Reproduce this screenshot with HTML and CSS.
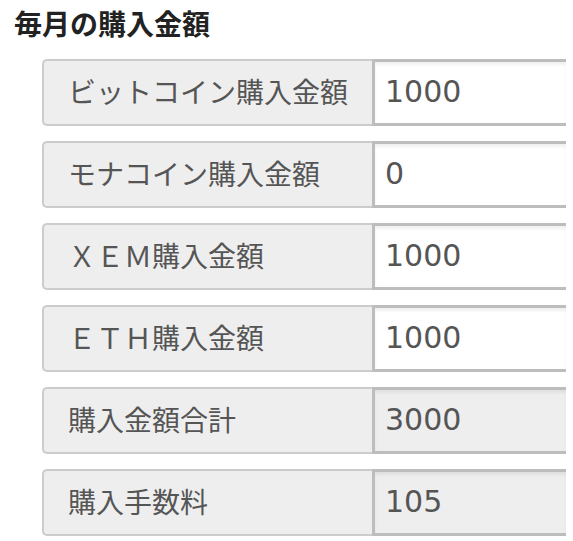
FILE: index.html
```html
<!DOCTYPE html>
<html lang="ja">
<head>
    <meta charset="UTF-8">
    <title>毎月の購入金額</title>
    <link rel="stylesheet" href="styles.css">
</head>
<body>

    <h2 class="title">毎月の購入金額</h2>

    <!-- 入力欄 -->
    <div class="form">
        <div class="row">
            <span class="label">ビットコイン購入金額</span>
            <input class="amount" type="text" value="1000">
        </div>
        <div class="row">
            <span class="label">モナコイン購入金額</span>
            <input class="amount" type="text" value="0">
        </div>
        <div class="row">
            <span class="label">ＸＥＭ購入金額</span>
            <input class="amount" type="text" value="1000">
        </div>
        <div class="row">
            <span class="label">ＥＴＨ購入金額</span>
            <input class="amount" type="text" value="1000">
        </div>

        <!-- 計算結果 (読み取り専用) -->
        <div class="row">
            <span class="label">購入金額合計</span>
            <input class="amount" type="text" value="3000" readonly>
        </div>
        <div class="row">
            <span class="label">購入手数料</span>
            <input class="amount" type="text" value="105" readonly>
        </div>
    </div>

</body>
</html>
```

FILE: styles.css
```css
body {
    margin: 0;
    background: #fff;
    font-family: "DejaVu Sans", "Noto Sans CJK JP", sans-serif;
    color: #555;
}

.title {
    margin: 0;
    padding: 3px 14px 0;
    height: 56px;
    font-family: "Noto Sans CJK JP", sans-serif;
    font-size: 28px;
    font-weight: bold;
    line-height: 40px;
    color: #222;
}

.form {
    display: flex;
    flex-direction: column;
    gap: 15px;
    margin-left: 42px;
    width: 524px;
}

.row {
    display: flex;
    height: 67px;
}

.label {
    display: flex;
    align-items: center;
    box-sizing: border-box;
    width: 330px;
    padding: 0 0 4px 24px;
    background: #eee;
    border: 2px solid #ccc;
    border-right: none;
    border-radius: 5px 0 0 5px;
    font-family: "Noto Sans CJK JP", sans-serif;
    font-size: 28px;
    color: #555;
    white-space: nowrap;
}

.amount {
    flex: 1;
    min-width: 0;
    box-sizing: border-box;
    height: 67px;
    margin: 0;
    padding: 0 0 2px 10px;
    border: 3px solid #bdbdbd;
    border-right: none;
    border-radius: 0;
    box-shadow: inset 0 3px 3px rgba(0, 0, 0, 0.06);
    background: #fff;
    font-family: "DejaVu Sans", sans-serif;
    font-size: 30px;
    color: #555;
    outline: none;
}

.amount[readonly] {
    background: #eee;
}
```
